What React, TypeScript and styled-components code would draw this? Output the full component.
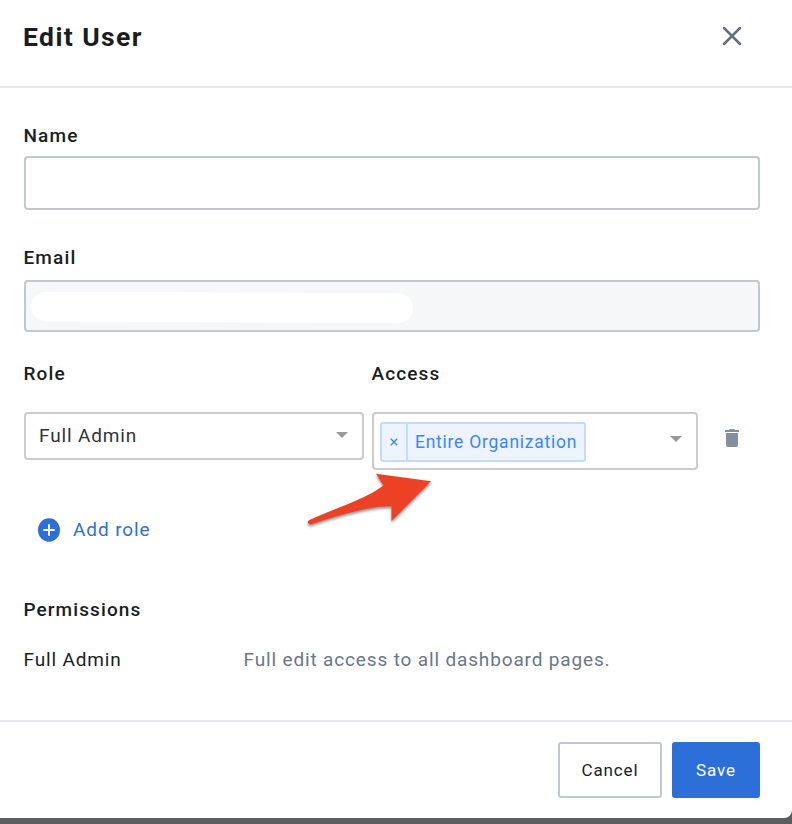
import React from "react";
import styled, { createGlobalStyle } from "styled-components";

const GlobalStyle = createGlobalStyle`
  *, *::before, *::after { box-sizing: border-box; }
  body { margin: 0; background: #5b5c5e; font-family: Roboto, "Liberation Sans", sans-serif; color: #1b1d20; }
  button, input { font: inherit; color: inherit; letter-spacing: inherit; }
`;

const Backdrop = styled.div`
  width: 792px;
  height: 824px;
  overflow: hidden;
  background: #5b5c5e;
`;

const Dialog = styled.section`
  height: 818px;
  display: flex;
  flex-direction: column;
  background: #fff;
  border-bottom-right-radius: 8px;
`;

const Header = styled.header`
  display: flex;
  justify-content: space-between;
  height: 88px;
  padding: 22px 50px 0 23px;
  border-bottom: 2px solid #e7e9ed;
`;

const Title = styled.h1`
  margin: 0;
  font-size: 26.5px;
  line-height: 29px;
  font-weight: 700;
  letter-spacing: 1.4px;
`;

const CloseButton = styled.button`
  width: 20px;
  height: 28px;
  padding: 0;
  border: 0;
  background: none;
  display: flex;
  align-items: center;
`;

const Body = styled.div`
  flex: 1;
  padding: 35px 32px 0 24px;
`;

const Label = styled.label`
  display: block;
  margin-left: -0.6px;
  font-size: 19px;
  line-height: 25px;
  font-weight: 500;
  letter-spacing: 1.15px;
`;

const Field = styled.div<{ $gap: number }>`
  display: flex;
  flex-direction: column;
  gap: ${(p) => p.$gap}px;
`;

const TextInput = styled.input`
  height: 54px;
  width: 100%;
  border: 2px solid #c1c8d1;
  border-radius: 4px;
  background: #fff;
  outline: none;
`;

const EmailField = styled(Field)`
  margin-top: 35px;
`;

const LockedInput = styled.div`
  height: 52px;
  padding: 9px 4px;
  border: 2px solid #c1c8d1;
  border-radius: 4px;
  background: #f5f7f9;
  svg { display: block; }
`;

const RoleGrid = styled.div`
  display: grid;
  grid-template-columns: 340px 326px 1fr;
  column-gap: 8px;
  row-gap: 26px;
  align-items: start;
  margin-top: 29px;
`;

const AccessLabel = styled(Label)`
  grid-column: 2 / 4;
`;

const Select = styled.div<{ $height: number; $padding: string }>`
  display: flex;
  justify-content: space-between;
  align-items: center;
  height: ${(p) => p.$height}px;
  padding: ${(p) => p.$padding};
  border: 2px solid #ccc;
  border-radius: 4px;
`;

const SelectValue = styled.span`
  font-size: 19px;
  line-height: 25px;
  letter-spacing: 0.85px;
  color: #333;
`;

const Caret = styled.span<{ $lift?: number }>`
  margin-bottom: ${(p) => p.$lift ?? 0}px;
  border: solid transparent;
  border-top-color: #999;
  border-width: 6px 6px 0;
`;

const Tag = styled.span`
  display: flex;
  width: 206px;
  height: 40px;
  margin-top: 2px;
  border: 2px solid #c2dbff;
  border-radius: 3px;
  background: #edf4ff;
  color: #3b86f7;
`;

const TagRemove = styled.span`
  display: flex;
  align-items: center;
  justify-content: center;
  width: 26px;
  border-right: 2px solid #c2dbff;
`;

const TagText = styled.span`
  padding-left: 7px;
  font-size: 17.5px;
  line-height: 36px;
  letter-spacing: 0.75px;
  white-space: nowrap;
`;

const DeleteButton = styled.button`
  height: 19px;
  width: 14px;
  margin: 17px 0 0 19px;
  padding: 0;
  border: 0;
  background: none;
  svg { display: block; }
`;

const AddRole = styled.button`
  display: flex;
  align-items: center;
  gap: 13px;
  height: 26px;
  margin: 47px 0 0 14px;
  padding: 0;
  border: 0;
  background: none;
  color: #2c6fd9;
`;

const AddText = styled.span`
  font-size: 19px;
  line-height: 26px;
  letter-spacing: 0.9px;
`;

const PermissionsTitle = styled.h2`
  margin: 54px 0 0 -0.6px;
  font-size: 19px;
  line-height: 25px;
  font-weight: 500;
  letter-spacing: 1.1px;
`;

const Permission = styled.div`
  display: grid;
  grid-template-columns: 220px 1fr;
  margin: 25px 0 0 -0.5px;
  font-size: 19px;
  line-height: 25px;
  letter-spacing: 0.85px;
`;

const PermissionNote = styled.span`
  color: #6b7785;
`;

const Footer = styled.footer`
  display: flex;
  justify-content: flex-end;
  gap: 10px;
  height: 98px;
  padding: 20px 32px 0 0;
  border-top: 2px solid #e7e9ed;
`;

const Button = styled.button<{ $primary?: boolean }>`
  width: ${(p) => (p.$primary ? 88 : 104)}px;
  height: 56px;
  padding: 0;
  border: 2px solid ${(p) => (p.$primary ? "#2c6fd9" : "#c1c8d1")};
  border-radius: 3px;
  background: ${(p) => (p.$primary ? "#2c6fd9" : "#fff")};
  color: ${(p) => (p.$primary ? "#fff" : "#1b1d20")};
  font-size: 17px;
  letter-spacing: 0.9px;
`;

const AccessCell = styled.div`
  position: relative;
`;

const Pointer = styled.svg`
  position: absolute;
  left: -72px;
  top: 54px;
  filter: drop-shadow(0 2px 1.5px rgba(0, 0, 0, 0.45));
`;

export default function App() {
  return (
    <>
      <GlobalStyle />
      <Backdrop>
        <Dialog>
          <Header>
            <Title>Edit User</Title>
            <CloseButton aria-label="Close">
              <svg width="20" height="20" viewBox="0 0 20 20">
                <path d="M2 2L18 18M18 2L2 18" stroke="#64707f" strokeWidth="2.5" strokeLinecap="round" />
              </svg>
            </CloseButton>
          </Header>
          <Body>
            <Field $gap={8}>
              <Label htmlFor="name">Name</Label>
              <TextInput id="name" />
            </Field>
            <EmailField $gap={10}>
              <Label>Email</Label>
              <LockedInput>
                <svg width="384" height="34" viewBox="0 0 384 34">
                  <path d="M16 .7L368 2.2A14.8 14.8 0 0 1 368 32.2L16 30.5A14.9 14.9 0 0 1 16 .7Z" fill="#fff" />
                </svg>
              </LockedInput>
            </EmailField>
            <RoleGrid>
              <Label>Role</Label>
              <AccessLabel>Access</AccessLabel>
              <Select $height={48} $padding="0 14px 2px 13px">
                <SelectValue>Full Admin</SelectValue>
                <Caret />
              </Select>
              <AccessCell>
                <Select $height={58} $padding="0 14px 0 6px">
                  <Tag>
                    <TagRemove>
                      <svg width="8" height="8" viewBox="0 0 8 8">
                        <path d="M.8 .8L7.2 7.2M7.2 .8L.8 7.2" stroke="currentColor" strokeWidth="1.4" />
                      </svg>
                    </TagRemove>
                    <TagText>Entire Organization</TagText>
                  </Tag>
                  <Caret $lift={4} />
                </Select>
                <Pointer width="140" height="64" viewBox="300 466 140 64">
                  <path d="M376 473.8L431 481.3L391.5 521V506.3C373 505 337 515.5 311 524.2Q308 524.8 307.8 522Q308 520.5 310 519.7C335 508.5 366 499 383.5 485.5Z" fill="#ec4125" />
                </Pointer>
              </AccessCell>
              <DeleteButton aria-label="Delete role">
                <svg width="14" height="19" viewBox="0 0 14 19">
                  <path d="M0 1H4L5 0H9L10 1H14V3H0ZM1 4H13V16Q13 18 11 18H3Q1 18 1 16Z" fill="#8490a0" />
                </svg>
              </DeleteButton>
            </RoleGrid>
            <AddRole>
              <svg width="22" height="24" viewBox="0 0 22 24">
                <ellipse cx="11" cy="12" rx="11" ry="11.8" fill="#2c6fd9" />
                <path d="M5.3 12H16.7M11 6.2V17.8" stroke="#fff" strokeWidth="2" />
              </svg>
              <AddText>Add role</AddText>
            </AddRole>
            <PermissionsTitle>Permissions</PermissionsTitle>
            <Permission>
              <span>Full Admin</span>
              <PermissionNote>Full edit access to all dashboard pages.</PermissionNote>
            </Permission>
          </Body>
          <Footer>
            <Button>Cancel</Button>
            <Button $primary>Save</Button>
          </Footer>
        </Dialog>
      </Backdrop>
    </>
  );
}
